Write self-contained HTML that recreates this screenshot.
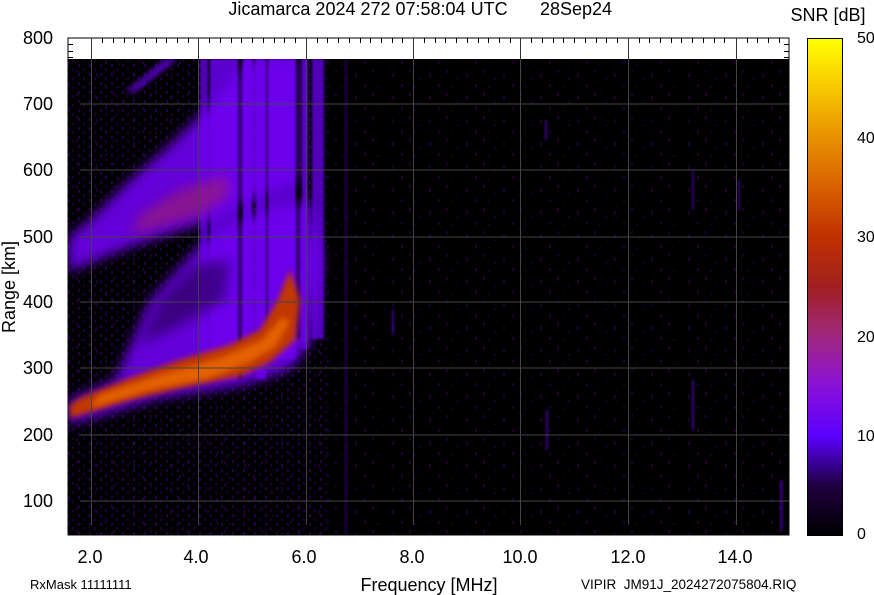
<!DOCTYPE html>
<html><head><style>
body{margin:0;background:#fff;width:874px;height:595px;overflow:hidden;font-family:"Liberation Sans",sans-serif}
svg{position:absolute;left:0;top:0}
</style></head><body>
<svg width="874" height="595" xmlns="http://www.w3.org/2000/svg" font-family="Liberation Sans, sans-serif">
<defs>
<filter id="b3"><feGaussianBlur stdDeviation="3"/></filter>
<filter id="b6"><feGaussianBlur stdDeviation="6"/></filter>
<filter id="b1"><feGaussianBlur stdDeviation="1"/></filter>
<linearGradient id="cb" x1="0" y1="1" x2="0" y2="0">
<stop offset="0" stop-color="#000"/>
<stop offset="0.1" stop-color="#200040"/>
<stop offset="0.2" stop-color="#5a00ff"/>
<stop offset="0.3" stop-color="#8a10d8"/>
<stop offset="0.4" stop-color="#a02880"/>
<stop offset="0.5" stop-color="#a02020"/>
<stop offset="0.6" stop-color="#c03000"/>
<stop offset="0.7" stop-color="#d86000"/>
<stop offset="0.8" stop-color="#e89000"/>
<stop offset="0.9" stop-color="#f8c800"/>
<stop offset="1" stop-color="#ffff00"/>
</linearGradient>
<pattern id="noise" width="37" height="23" patternUnits="userSpaceOnUse">
<rect x="2" y="1" width="2" height="3" fill="#2a0045"/><rect x="13" y="9" width="2" height="2" fill="#200035"/><rect x="22" y="4" width="2" height="4" fill="#250040"/><rect x="31" y="15" width="2" height="3" fill="#2a0048"/><rect x="7" y="17" width="2" height="2" fill="#1d0030"/>
</pattern>
<pattern id="noise2" width="11" height="9" patternUnits="userSpaceOnUse">
<rect x="1" y="1" width="2" height="3" fill="#6000c0"/><rect x="6" y="5" width="2" height="3" fill="#400090"/>
</pattern>
<clipPath id="dc"><rect x="68" y="59" width="721" height="476"/></clipPath>
</defs>
<text x="368" y="15" font-size="18" text-anchor="middle">Jicamarca 2024 272 07:58:04 UTC</text>
<text x="576" y="15" font-size="18" text-anchor="middle">28Sep24</text>
<text x="828" y="21" font-size="18" text-anchor="middle">SNR [dB]</text>
<rect x="68" y="38" width="721" height="497" fill="#fff" stroke="#000"/>
<g clip-path="url(#dc)">
<rect x="68" y="59" width="721" height="476" fill="#000"/>
<rect x="68" y="59" width="721" height="476" fill="url(#noise)" opacity="0.7"/>
<rect x="68" y="59" width="260" height="476" fill="url(#noise2)" opacity="0.35"/>
<g filter="url(#b1)" fill="#6a00f0">
<rect x="200" y="59" width="8" height="320" opacity=".75"/>
<rect x="210" y="59" width="28" height="320" opacity=".85"/>
<rect x="243" y="59" width="9" height="315" opacity=".9"/>
<rect x="256" y="59" width="10" height="320" opacity=".85"/>
<rect x="268" y="59" width="28" height="300" opacity=".85"/>
<rect x="302" y="59" width="6" height="290" opacity=".8"/>
<rect x="312" y="59" width="12" height="280" opacity=".75"/>
<rect x="345" y="59" width="2" height="476" opacity=".35"/>
<rect x="392" y="310" width="2" height="25" opacity=".6"/>
<rect x="545" y="120" width="2" height="20" opacity=".6"/>
<rect x="546" y="410" width="2" height="40" opacity=".6"/>
<rect x="692" y="380" width="2" height="50" opacity=".6"/>
<rect x="692" y="170" width="2" height="40" opacity=".5"/>
<rect x="738" y="180" width="2" height="30" opacity=".5"/>
<rect x="780" y="480" width="3" height="50" opacity=".5"/>
</g>
<path d="M125 92 L135 92 L178 59 L165 59 Z" fill="#6a00f0" filter="url(#b3)" opacity=".8"/>
<path d="M68 272 L130 247 L200 224 L245 203 L300 178 L300 59 L245 59 L220 95 L170 145 L130 180 L95 215 L68 238 Z" fill="#6e00f0" filter="url(#b6)" opacity=".9"/>
<path d="M130 235 L200 215 L230 195 L225 175 L180 190 L140 215 Z" fill="#a02060" filter="url(#b6)" opacity=".6"/>
<path d="M68 425 L160 398 L240 386 L290 370 L312 340 L322 260 L310 200 L250 215 L200 245 L150 300 L115 380 L68 400 Z" fill="#6e00f0" filter="url(#b6)" opacity=".9"/>
<path d="M140 345 L180 325 L225 300 L230 260 L195 265 L160 300 Z" fill="#000" filter="url(#b6)" opacity=".4"/>
<g fill="#000" opacity=".45" filter="url(#b1)"><rect x="238" y="59" width="4" height="320"/><rect x="296" y="59" width="4" height="280"/><rect x="266" y="59" width="2" height="300"/></g>
<path d="M70 418 L130 400 L180 388 L240 376 L270 362 L295 340 L300 300 L290 270 L278 300 L260 330 L230 345 L180 360 L130 378 L80 398 L70 405 Z" fill="#c03800" filter="url(#b3)"/>
<path d="M90 408 L150 390 L210 378 L250 362 L275 347 L290 322 L282 317 L262 340 L220 358 L160 375 L100 395 Z" fill="#f07000" filter="url(#b3)" opacity=".75"/>
</g>
<g stroke="#444" stroke-width="1">
<path d="M80 104H789M80 170H789M80 237H789M80 302H789M80 368H789M80 435H789M80 501H789"/>
<path d="M91.5 59V525M198.5 59V525M306.5 59V525M413.5 59V525M520.5 59V525M628.5 59V525M736.5 59V525"/>
</g>
<g stroke="#333" stroke-width="1">
<path d="M91.5 38V59M198.5 38V59M306.5 38V59M413.5 38V59M520.5 38V59M628.5 38V59M736.5 38V59"/>
</g>
<g stroke="#000" stroke-width="1">
<path d="M102.5 38v5M113.5 38v5M124.5 38v5M134.5 38v5M145.5 38v5M156.5 38v5M166.5 38v5M177.5 38v5M188.5 38v5M209.5 38v5M220.5 38v5M231.5 38v5M241.5 38v5M252.5 38v5M263.5 38v5M274.5 38v5M284.5 38v5M295.5 38v5M317.5 38v5M327.5 38v5M338.5 38v5M349.5 38v5M360.5 38v5M370.5 38v5M381.5 38v5M392.5 38v5M402.5 38v5M424.5 38v5M435.5 38v5M445.5 38v5M456.5 38v5M467.5 38v5M478.5 38v5M488.5 38v5M499.5 38v5M510.5 38v5M531.5 38v5M542.5 38v5M553.5 38v5M563.5 38v5M574.5 38v5M585.5 38v5M596.5 38v5M606.5 38v5M617.5 38v5M639.5 38v5M649.5 38v5M660.5 38v5M671.5 38v5M681.5 38v5M692.5 38v5M703.5 38v5M714.5 38v5M724.5 38v5M747.5 38v5M757.5 38v5M768.5 38v5M779.5 38v5"/>
<path d="M68 44.5h5M68 51.5h5M68 57.5h5M784 44.5h5M784 51.5h5M784 57.5h5"/>
</g>
<g font-size="18" text-anchor="end">
<text x="53" y="44">800</text><text x="53" y="110">700</text><text x="53" y="176">600</text><text x="53" y="243">500</text><text x="53" y="308">400</text><text x="53" y="374">300</text><text x="53" y="441">200</text><text x="53" y="507">100</text>
</g>
<text transform="translate(15 287) rotate(-90)" font-size="18" text-anchor="middle">Range [km]</text>
<g font-size="18" text-anchor="middle">
<text x="90" y="563">2.0</text><text x="196" y="563">4.0</text><text x="304" y="563">6.0</text><text x="412" y="563">8.0</text><text x="520" y="563">10.0</text><text x="628" y="563">12.0</text><text x="735" y="563">14.0</text>
</g>
<text x="429" y="591" font-size="18" text-anchor="middle">Frequency [MHz]</text>
<text x="30" y="589" font-size="13">RxMask 11111111</text>
<text x="581" y="589" font-size="13.5">VIPIR&#160;&#160;JM91J_2024272075804.RIQ</text>
<rect x="807.5" y="38.5" width="35" height="497" fill="url(#cb)" stroke="#000"/>
<g font-size="16">
<text x="857" y="43">50</text><text x="857" y="143">40</text><text x="857" y="242">30</text><text x="857" y="342">20</text><text x="857" y="441">10</text><text x="857" y="539">0</text>
</g>
</svg>
</body></html>
